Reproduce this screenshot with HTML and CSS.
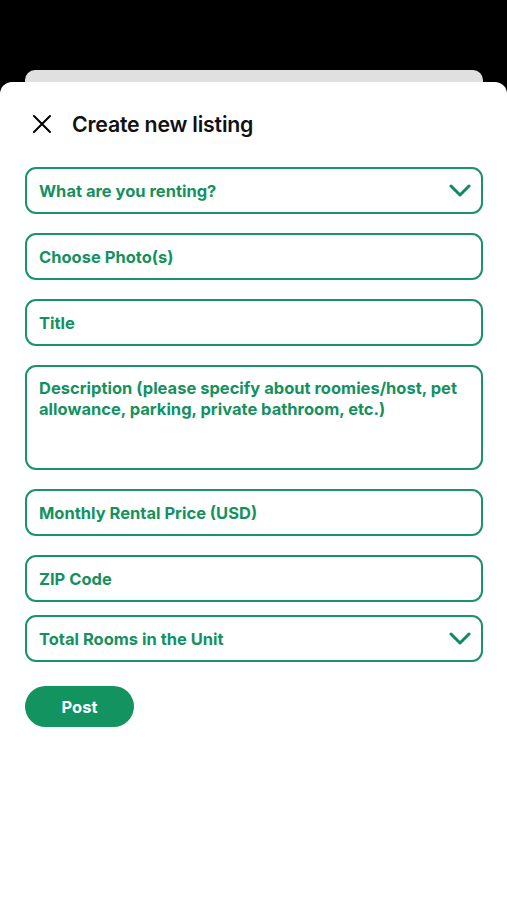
FILE: index.html
```html
<!DOCTYPE html>
<html lang="en">
<head>
    <meta charset="UTF-8">
    <meta name="viewport" content="width=device-width, initial-scale=1.0">
    <title>Create new listing</title>
    <link rel="stylesheet" href="styles.css">
</head>
<body>
    <div class="backdrop">
        <div class="back-card"></div>
    </div>

    <section class="sheet">
        <header class="sheet-header">
            <button class="close-btn" aria-label="Close">
                <svg width="20" height="20" viewBox="0 0 20 20">
                    <path d="M2 2 L18 18 M18 2 L2 18" stroke="#000" stroke-width="2" stroke-linecap="round" fill="none"/>
                </svg>
            </button>
            <h1>Create new listing</h1>
        </header>

        <form class="listing-form">
            <div class="field select">
                <span>What are you renting?</span>
                <svg class="chevron" width="22" height="14" viewBox="0 0 22 14">
                    <path d="M2 2 L11 11 L20 2" stroke="currentColor" stroke-width="3" stroke-linecap="round" stroke-linejoin="round" fill="none"/>
                </svg>
            </div>
            <div class="field"><span>Choose Photo(s)</span></div>
            <div class="field"><span>Title</span></div>
            <div class="field textarea"><span>Description (please specify about roomies/host, pet allowance, parking, private bathroom, etc.)</span></div>
            <div class="field"><span>Monthly Rental Price (USD)</span></div>
            <div class="field"><span>ZIP Code</span></div>
            <div class="field select tight">
                <span>Total Rooms in the Unit</span>
                <svg class="chevron" width="22" height="14" viewBox="0 0 22 14">
                    <path d="M2 2 L11 11 L20 2" stroke="currentColor" stroke-width="3" stroke-linecap="round" stroke-linejoin="round" fill="none"/>
                </svg>
            </div>
            <button type="button" class="post-btn">Post</button>
        </form>
    </section>
</body>
</html>
```

FILE: styles.css
```css
body {
    margin: 0;
    background: #000;
    font-family: Inter, "Liberation Sans", sans-serif;
    height: 900px;
    overflow: hidden;
}

.backdrop {
    height: 82px;
    display: flex;
    justify-content: center;
    align-items: flex-end;
}

.back-card {
    width: 458px;
    height: 12px;
    background: #e0e0e0;
    border-radius: 10px 10px 0 0;
}

.sheet {
    background: #fff;
    border-radius: 12px 12px 0 0;
    height: 818px;
    padding: 30px 24px 0 25px;
    box-sizing: border-box;
}

.sheet-header {
    display: flex;
    align-items: center;
    gap: 19px;
    height: 24px;
    margin-bottom: 31px;
}

.close-btn {
    background: none;
    border: none;
    padding: 0 0 0 7px;
    width: 28px;
    height: 24px;
    display: flex;
    align-items: center;
    cursor: pointer;
}

.sheet-header h1 {
    margin: 0;
    font-size: 21.3px;
    font-weight: 600;
    color: #111;
    letter-spacing: -0.2px;
}

.listing-form {
    display: flex;
    flex-direction: column;
    gap: 19px;
}

.field {
    height: 47px;
    box-sizing: border-box;
    border: 2px solid #1a936a;
    border-radius: 11px;
    padding: 0 10px 0 12px;
    display: flex;
    align-items: center;
    justify-content: space-between;
    color: #15915f;
    font-size: 16.5px;
    font-weight: 700;
}

.field.textarea {
    height: 105px;
    align-items: flex-start;
    padding-top: 11px;
    line-height: 21px;
    padding-right: 16px;
}

.field.tight {
    margin-top: -6px;
}

.chevron {
    color: #12895c;
}

.post-btn {
    margin-top: 5px;
    width: 109px;
    height: 41px;
    border: none;
    border-radius: 21px;
    background: #12935f;
    color: #fff;
    font-family: inherit;
    font-size: 16.5px;
    font-weight: 700;
    cursor: pointer;
}
```
